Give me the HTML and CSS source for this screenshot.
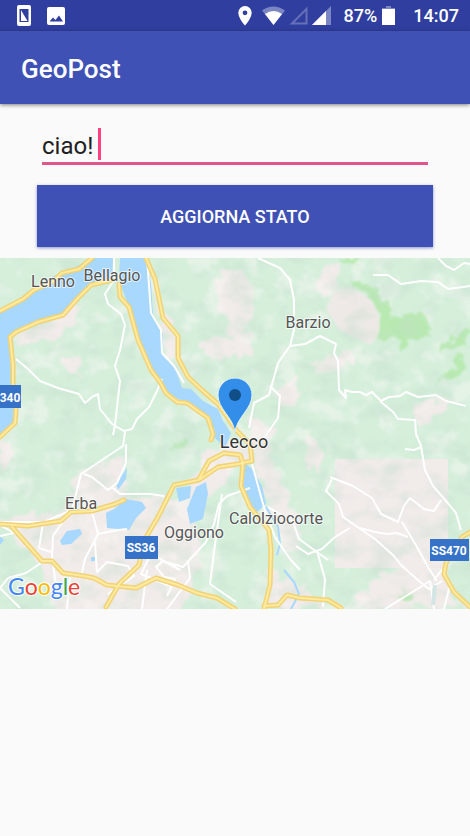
FILE: index.html
```html
<!DOCTYPE html>
<html lang="it">
<head>
<meta charset="utf-8">
<meta name="viewport" content="width=device-width, initial-scale=1">
<title>GeoPost</title>
<link rel="stylesheet" href="styles.css">
</head>
<body>
<div class="status">
  <svg class="icon-phone" viewBox="0 0 14 21" width="14" height="21"><rect width="14" height="21" rx="2" fill="#fff"/><rect x="2.5" y="4" width="9" height="13" fill="#303f9f"/><path d="M3.500 5l7 11h-7z" fill="#303f9f"/><path d="M4 5l6.500 11V5z" fill="#303f9f"/><path d="M4 5l6.500 11H4z" fill="#fff"/></svg>
  <svg class="icon-photo" viewBox="0 0 18 18" width="18" height="18"><rect width="18" height="18" rx="2" fill="#fff"/><path d="M2.500 14.500l3.500-4 2.500 2.500 3.500-4.500 4 6z" fill="#303f9f"/></svg>
  <div class="status-right">
    <svg viewBox="0 0 14 20" width="14" height="20"><path d="M7 0a6.700 6.700 0 0 0-6.700 6.700C.3 12 7 19.500 7 19.500S13.700 12 13.700 6.700A6.700 6.700 0 0 0 7 0zm0 4.400a2.400 2.400 0 1 1 0 4.800 2.400 2.400 0 0 1 0-4.800z" fill="#fff"/></svg>
    <svg class="icon-wifi" viewBox="0 0 23 19" width="23" height="19"><path d="M0 4.500Q11.500-3.500 23 4.500L11.500 19z" fill="#7c85c4"/><path d="M3 8Q11.500 2 20 8L11.500 19z" fill="#fff"/></svg>
    <svg class="icon-signal" viewBox="0 0 19 19" width="19" height="19"><path d="M17.500 3v14.500H3z" fill="none" stroke="#6670b8" stroke-width="2"/></svg>
    <svg class="icon-signal" viewBox="0 0 19 19" width="19" height="19"><path d="M19 0v19H0z" fill="#7c85c4"/><path d="M14 5v14H0z" fill="#fff"/></svg>
    <span class="percent">87%</span>
    <svg class="icon-battery" viewBox="0 0 13 19" width="13" height="19"><path d="M4 0h5v2h4v3H0V2h4z" fill="#7c85c4"/><path d="M0 3h13v16H0z" fill="#fff"/></svg>
    <time>14:07</time>
  </div>
</div>
<header class="appbar"><h1>GeoPost</h1></header>
<main>
  <form class="form">
    <div class="field"><input type="text" value="ciao!" aria-label="Stato"><span class="caret"></span></div>
    <button type="button">AGGIORNA STATO</button>
  </form>
  <svg class="map" viewBox="0 258 470 351" role="img" aria-label="Mappa di Lecco">
    <defs>
      <filter id="soft" x="-30%" y="-30%" width="160%" height="160%"><feGaussianBlur stdDeviation="1"/></filter>
      <filter id="rough" x="-20%" y="-20%" width="140%" height="140%"><feTurbulence type="fractalNoise" baseFrequency=".08" numOctaves="3" seed="4"/><feDisplacementMap in="SourceGraphic" scale="20" xChannelSelector="R" yChannelSelector="G"/><feGaussianBlur stdDeviation="1"/></filter>
      <filter id="relief" x="0" y="0" width="100%" height="100%"><feTurbulence type="fractalNoise" baseFrequency=".035 .05" numOctaves="3" seed="12"/><feColorMatrix values="0 0 0 0 .55  0 0 0 0 .73  0 0 0 0 .61  3 0 0 0 -1.35"/></filter>
      <filter id="pale" x="0" y="0" width="100%" height="100%"><feTurbulence type="fractalNoise" baseFrequency=".04" numOctaves="3" seed="31"/><feColorMatrix values="0 0 0 0 .96  0 0 0 0 .94  0 0 0 0 .91  0 5 0 0 -2.600"/></filter>
    </defs>
    <rect y="258" width="470" height="351" fill="#d5efdb"/>
    <g fill="#f1ebe9" filter="url(#rough)">
      <path d="M222 268l14-2 16 24 4 22-8 10 4 28-6 12-20-6-10 4-18-10 12-12 22-2-2-18-16-8z"/>
      <path d="M15 334l38-16 18-16 12-2-4 22-22 18-35 5zM60 355l22 6-4 14-18-8z"/>
      <path d="M150 262l12 45 20 40-12 14-12-45zM280 385l18-10-4 30-18 6zM248 415l24 10-2 30 28 60 2 34-14 6-24-70-12-40z"/>
      <path d="M0 518l60-6 20-40 44-18 2 40 60 8 20-52 36-8 10 12-60 60 10 40-20 62H58l-18-50z"/>
      <path d="M320 270l24-6-8 25-15 6zM416 404l35-7-12 20-24 12zM308 365l45-15-5 16-35 6zM0 432l12 15-3 22-9 4zM305 432l16 14-3 28-14-6zM370 580l62-26 32 55H350zM266 570l24 10 38 29h-62z"/>
    </g>
    <rect y="258" width="470" height="351" filter="url(#pale)" opacity=".45"/>
    <g fill="#b4e9aa" filter="url(#rough)" opacity=".85">
      <path d="M350 283l18-2 10 14 12 10 2 13 14-2 16-4 10 20-12 8h-12l-6 14-6-14h-22l6-22-10-16zM444 340l26-10v12l-30 8zM455 355l10 3-5 17-24 7 18-16zM342 258h14v7h-12zM170 446l16-7-5 12zM402 588l10 3v8l-16-2z"/>
    </g>
    <path d="M344 288a36 36 0 0 1 36 36q0 15-10 21l-30-14-14-22 8-18z" fill="#f1e9e8" opacity=".9" filter="url(#soft)"/>
    <rect x="335" y="459" width="113" height="109" fill="#f1ebea"/>
    <rect y="258" width="470" height="351" filter="url(#relief)" opacity=".4"/>

    <g fill="#a8d8fe">
      <path d="M92 258 72 269 54 276 36 287 0 312V438L13 426 16 410 14 365 10 341 14 334 38 324 66 315 78 298 91 287 112 280 113 258z"/>
      <path d="M120 258 119 280 126 299 135 324 144 353 156 377 169 394 184 402 203 413 214 437 225 448 231 433 223 421 218 409 203 401 191 389 182 388 175 367 163 356 163 334 153 314 151 283 145 258z"/>
      <path d="M126 499 142 502 146 508 136 518 129 530 107 528 106 513 114 509zM60 541 67 531 80 529 82 534 71 544 62 545zM176 488 191 486 190 498 179 502zM206 482 208 494 203 519 190 524 187 509 196 487z"/>
      <path d="M244 462 252 469 262 486 266 504 257 512 248 502 243 485z"/>
      <path d="M127 468 116 483 118 490 126 479zM0 536l4 4-4 5zM91 557h4v4h-4z"/>
    </g>
    <path d="M266 507l12 20 2 17-3 11M284 570l10 12 5 12-8 15" fill="none" stroke="#a8d8fe" stroke-width="2"/>

    <g class="minor">
      <path d="M114 258v22l-9 14 3 10 13 10 4 11-5 25-5 16 5 15-5 44-2 10M16 359l12 10 12 12 18 7 21 6 6 9 7-6 6-3 2 15 12 15 12 7 8-2 5-10 12-12 8-16 5-12"/>
      <path d="M147 258l4 55 10 17 1 23 12 13 10 17M258 258l22 10 10 12 4 20v30l-4 16-12 17-9 32-15 8-5 25"/>
      <path d="M290 346l15-2 15-8 16 8-2 9 4 8 1 29 7 8-1-8 7 2h8l6 3 6-3 9 9 8-4 11-1 6-4 12 5 18-2 10 6 20 5M270 386l10 10-2 22-14 20"/>
      <path d="M373 275h15l13 9 20-3 17 1 10 7 22-3M438 258l8 8 8 4 10-7 6 1"/>
      <path d="M380 401l13 11 5 7 17 1 1 14 5 12 4 24 8 16 13 15 10 12 5 17M421 447l-7 3-9-1"/>
      <path d="M330 477l23 9 19 12 9 16 17 8 6-16 6-8 14 11 10 2 7-11M332 479l-6 12 13 13 4 13 16 11 16 11 18 16 8 10 18 16 10 8 13-8M402 522l15 25 11 20 9 14M360 528l15 4 12 2 10-1 11 4M350 528l-15 9-13 12-14 5-12-8M317 551l8 28-2 28"/>
      <path d="M300 570l-10-11-15-22-10-26-13-47M268 507l25 15 6 17 29 21M250 488l-23 8-8 8-5 20-8 18-23 25-20-6-7 6 8 10 11 2-8 17"/>
      <path d="M222 494l-8 58-4 32 26 18M125 432l-2 14-42 28-9 36-28 12H0M84 474l8 3 16 13 9-7 9-20v-19M112 487l8 7h30l14 2M92 512l6 22-13 25-4 18M98 534l20-4 9-1M95 543l2 30M70 511l-17 25-1 20 4 30M43 523l-4 25 12 4M41 563l-15 10-18 5-8 10 20 20M70 577l-3 32M97 572l10-10 21 4 6 10-26 18M147 570l-5 39M188 560l2 18-23 31"/>
      <path d="M170 586l-29-12 10-20 29 16M385 609l45-28 4 28M434 580l8-10 8 15-6 24M0 525l14 8-14 3"/>
    </g>
    <path d="M435 585l-2 20" stroke="#d3e5e4" stroke-width="4"/>

    <g class="major-edge">
      <path id="r1" d="M92 258 79 269 62 273 52 282 34 290 23 299 0 311M0 437 15 423 16 410 13 387 13 365 10 337 16 332 38 322 63 315 78 298 91 285 112 280"/>
      <path id="r2" d="M119 284 120 297 129 307 138 340 151 370 160 382 166 393 177 402 187 403 208 418 213 434 211 440M146 258 155 279 163 318 178 336 178 358 188 377 203 391 218 404 226 415 237 431 250 444 252 461 238 464 218 467 199 480 174 485 159 515 144 541 139 565 119 584 106 607"/>
      <path id="r3" d="M0 524 28 526 61 521 71 512 92 511 115 504 124 500M12 527 42 561 52 561 63 573 84 576 94 578 107 585 136 588 156 578 178 585 197 593 217 598 235 609"/>
      <path id="r4" d="M199 479 209 461 224 453 240 455 243 463 241 486 250 507 269 530 271 550 270 585 264 609M264 606 278 605 287 595 300 598 328 600 341 608M470 532 462 537 456 547 446 563 444 574 454 592 470 607"/>
    </g>
    <g class="major"><use href="#r1"/><use href="#r2"/><use href="#r3"/><use href="#r4"/></g>

    <g class="places">
      <text x="53" y="287">Lenno</text><text x="112" y="281">Bellagio</text><text x="308" y="328">Barzio</text>
      <text x="81" y="509">Erba</text><text x="194" y="538">Oggiono</text><text x="276" y="524">Calolziocorte</text>
      <text x="244" y="448" class="city">Lecco</text>
    </g>
    <g fill="#3673c8"><path d="M0 385h21v23H0zM125 536h33v23h-33zM430 539h39v22h-39z"/></g>
    <g class="shields"><text x="10" y="402">340</text><text x="141" y="552">SS36</text><text x="449" y="555">SS470</text></g>
    <path d="M235 432c-2-15-17-23-17-37a17 17 0 0 1 34 0c0 14-15 22-17 37z" fill="#338ee9" stroke="#e2f2f2" stroke-width="1"/>
    <circle cx="235" cy="395" r="6" fill="#104e87"/>
    <text x="8" y="595" class="logo"><tspan fill="#4285f4">G</tspan><tspan fill="#ea4335">o</tspan><tspan fill="#fbbc05">o</tspan><tspan fill="#4285f4">g</tspan><tspan fill="#34a853">l</tspan><tspan fill="#ea4335">e</tspan></text>
  </svg>
</main>
</body>
</html>
```
FILE: styles.css
```css
* { box-sizing: border-box; }
body { margin: 0; min-height: 100vh; background: #fafafa; font-family: Roboto, "Liberation Sans", sans-serif; color: #212121; }
svg { display: block; flex: none; }
.status { height: 31px; padding: 0 11px 0 17px; display: flex; align-items: center; gap: 16px; background: #303f9f; color: #fff; }
.status-right { margin-left: auto; display: flex; align-items: center; font-size: 18px; font-weight: 500; line-height: 20px; }
.icon-wifi { margin-left: 10px; }
.icon-signal { margin-left: 4px; }
.percent { margin-left: 13px; }
.icon-battery { margin: 0 18px 0 5px; }
.appbar { position: relative; height: 73px; padding: 2px 21px 0; display: flex; align-items: center; background: #3f51b5; box-shadow: 0 1px 4px rgba(0, 0, 0, .5); color: #fff; }
h1 { margin: 0; font-size: 26px; font-weight: 500; line-height: 32px; }
.form { padding: 22px 37px 11px; }
.field { position: relative; margin: 0 5px 20px; }
.field input { display: block; width: 100%; height: 39px; padding: 3px 0 0; border: 0; border-bottom: 3px solid #e0568a; border-radius: 0; outline: 0; background: transparent; color: #212121; font: 400 24px/32px Roboto, "Liberation Sans", sans-serif; }
.caret { position: absolute; left: 56px; top: 2px; width: 3px; height: 32px; background: #ff4081; }
button { display: block; width: 100%; height: 62px; padding: 2px 0 0; border: 0; background: #3f51b5; box-shadow: 0 1px 3px rgba(63, 81, 181, .6); color: #fff; font: 500 18px/24px Roboto, "Liberation Sans", sans-serif; }
.map { width: 100%; height: auto; }
.minor { fill: none; stroke: #fff; stroke-width: 2; stroke-linejoin: round; }
.major-edge, .major { fill: none; stroke-linejoin: round; stroke-linecap: round; }
.major-edge { stroke: #f2d275; stroke-width: 5; }
.major { stroke: #ffeba0; stroke-width: 2; }
.places { font-size: 16px; text-anchor: middle; fill: #555; stroke: #fff; stroke-opacity: .7; stroke-width: 2; paint-order: stroke; }
.city { font-size: 18px; fill: #333; }
.shields { font-size: 12px; font-weight: 700; text-anchor: middle; fill: #fff; }
.logo { font-family: Lato, sans-serif; font-size: 23px; font-weight: 400; stroke: #fff; stroke-width: 2; paint-order: stroke; }
.logo tspan { stroke: inherit; }
```
